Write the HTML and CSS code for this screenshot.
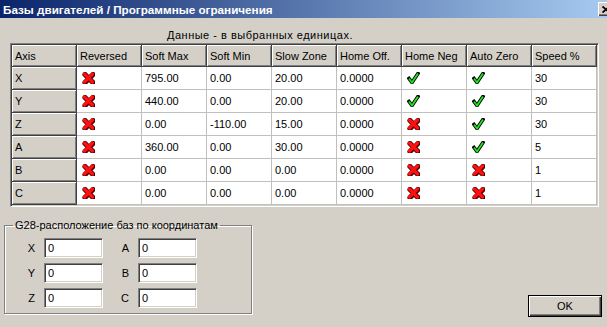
FILE: index.html
```html
<!DOCTYPE html>
<html>
<head>
  <title>Базы двигателей / Программные ограничения</title>
  <meta charset="utf-8">
  <link rel="stylesheet" href="styles.css">
</head>
<body>
  <svg class="defs" width="0" height="0">
    <symbol id="no" viewBox="0 0 13 12">
      <path d="M2.5 2 L10.5 10 M10.5 2 L2.5 10" stroke="#4a0000" stroke-width="5.2" stroke-linecap="round" transform="translate(0.5 0.5)"/>
      <path d="M2.5 2 L10.5 10 M10.5 2 L2.5 10" stroke="#ff1010" stroke-width="3.2" stroke-linecap="round"/>
    </symbol>
    <symbol id="yes" viewBox="0 0 12 12">
      <path d="M1.5 6.5 L4.5 10.5 L10.5 1.5" fill="none" stroke="#000" stroke-width="3.6" stroke-linejoin="miter" stroke-linecap="square"/>
      <path d="M1.5 6.5 L4.5 10.5 L10.5 1.5" fill="none" stroke="#1ee61e" stroke-width="1.8" stroke-linejoin="miter"/>
    </symbol>
  </svg>

  <div class="window">
    <div class="titlebar">
      <span class="title">Базы двигателей / Программные ограничения</span>
      <span class="close">
        <svg width="8" height="7" viewBox="0 0 8 7"><path d="M0.5 0.5 L7.5 6.5 M7.5 0.5 L0.5 6.5" stroke="#000" stroke-width="1.8"/></svg>
      </span>
    </div>

    <div class="caption">Данные - в выбранных единицах.</div>

    <!-- axis limits grid -->
    <div class="grid">
      <table>
        <tr>
          <th>Axis</th><th>Reversed</th><th>Soft Max</th><th>Soft Min</th><th>Slow Zone</th>
          <th>Home Off.</th><th>Home Neg</th><th>Auto Zero</th><th>Speed %</th>
        </tr>
        <tr>
          <th>X</th>
          <td><svg class="ico"><use href="#no"/></svg></td>
          <td>795.00</td><td>0.00</td><td>20.00</td><td>0.0000</td>
          <td><svg class="ico"><use href="#yes"/></svg></td>
          <td><svg class="ico"><use href="#yes"/></svg></td>
          <td>30</td>
        </tr>
        <tr>
          <th>Y</th>
          <td><svg class="ico"><use href="#no"/></svg></td>
          <td>440.00</td><td>0.00</td><td>20.00</td><td>0.0000</td>
          <td><svg class="ico"><use href="#yes"/></svg></td>
          <td><svg class="ico"><use href="#yes"/></svg></td>
          <td>30</td>
        </tr>
        <tr>
          <th>Z</th>
          <td><svg class="ico"><use href="#no"/></svg></td>
          <td>0.00</td><td>-110.00</td><td>15.00</td><td>0.0000</td>
          <td><svg class="ico"><use href="#no"/></svg></td>
          <td><svg class="ico"><use href="#yes"/></svg></td>
          <td>30</td>
        </tr>
        <tr>
          <th>A</th>
          <td><svg class="ico"><use href="#no"/></svg></td>
          <td>360.00</td><td>0.00</td><td>30.00</td><td>0.0000</td>
          <td><svg class="ico"><use href="#no"/></svg></td>
          <td><svg class="ico"><use href="#yes"/></svg></td>
          <td>5</td>
        </tr>
        <tr>
          <th>B</th>
          <td><svg class="ico"><use href="#no"/></svg></td>
          <td>0.00</td><td>0.00</td><td>0.00</td><td>0.0000</td>
          <td><svg class="ico"><use href="#no"/></svg></td>
          <td><svg class="ico"><use href="#no"/></svg></td>
          <td>1</td>
        </tr>
        <tr>
          <th>C</th>
          <td><svg class="ico"><use href="#no"/></svg></td>
          <td>0.00</td><td>0.00</td><td>0.00</td><td>0.0000</td>
          <td><svg class="ico"><use href="#no"/></svg></td>
          <td><svg class="ico"><use href="#no"/></svg></td>
          <td>1</td>
        </tr>
      </table>
    </div>

    <div class="bottom">
      <fieldset class="group">
        <legend>G28-расположение баз по координатам</legend>
        <div class="coords">
          <label>X</label><input class="field" value="0">
          <label>A</label><input class="field" value="0">
          <label>Y</label><input class="field" value="0">
          <label>B</label><input class="field" value="0">
          <label>Z</label><input class="field" value="0">
          <label>C</label><input class="field" value="0">
        </div>
      </fieldset>
      <button class="ok">OK</button>
    </div>
  </div>
</body>
</html>
```

FILE: styles.css
```css
* {
  box-sizing: border-box;
}
body {
  margin: 0;
  padding: 0;
  background: #d4d0c8;
  font-family: "Liberation Sans", Arial, sans-serif;
  font-size: 11px;
  color: #000;
  overflow: hidden;
}
.defs {
  position: absolute;
  width: 0;
  height: 0;
}

.window {
  width: 607px;
  height: 327px;
  overflow: hidden;
}

/* title bar */
.titlebar {
  display: flex;
  align-items: center;
  height: 18px;
  padding-left: 3px;
  background: linear-gradient(to right, #0a246a, #a6caf0);
}
.title {
  color: #fff;
  font-weight: bold;
  font-size: 11.7px;
}
.close {
  display: flex;
  align-items: center;
  justify-content: center;
  margin-left: auto;
  margin-right: -7px;
  width: 16px;
  height: 14px;
  background: #d4d0c8;
  box-shadow: inset 1px 1px 0 #fff, inset -1px -1px 0 #404040, inset -2px -2px 0 #808080;
}

.caption {
  margin: 11px 0 1px 167px;
  line-height: 13px;
  letter-spacing: 0.5px;
}

/* grid */
.grid {
  width: fit-content;
  margin-left: 10px;
  padding: 1px;
  border: 1px solid;
  border-color: #808080 #fff #fff #808080;
  box-shadow: inset 1px 1px 0 #404040, inset -1px -1px 0 #d4d0c8;
}
table {
  border-collapse: separate;
  border-spacing: 0;
  table-layout: fixed;
  width: 584px;
  background: #fff;
}
th, td {
  width: 65px;
  height: 23px;
  padding: 0 3px;
  text-align: left;
  font-weight: normal;
  white-space: nowrap;
}
th {
  background: #d4d0c8;
  border-right: 1px solid #404040;
  border-bottom: 1px solid #404040;
  box-shadow: inset 1px 1px 0 #fff, inset -1px -1px 0 #808080;
}
tr:first-child th {
  height: 22px;
}
td {
  border-right: 1px solid #c0c0c0;
  border-bottom: 1px solid #c0c0c0;
}
.ico {
  display: block;
  width: 13px;
  height: 12px;
  margin-left: 2px;
}

/* bottom part */
.bottom {
  display: flex;
  justify-content: space-between;
  align-items: flex-end;
  height: 112px;
  padding: 0 5px 0 4px;
}
.group {
  width: 248px;
  margin: 0 0 5px 0;
  padding: 6px 8px 5px 8px;
  border: 1px solid #808080;
  box-shadow: inset 1px 1px 0 #fff, 1px 1px 0 #fff;
}
.group legend {
  padding: 0 2px;
  line-height: 13px;
}
.coords {
  display: grid;
  grid-template-columns: 20px 59px 35px 59px;
  row-gap: 5px;
  margin-left: 11px;
}
.coords label {
  text-align: right;
  padding-right: 9px;
  line-height: 20px;
}
.field {
  width: 59px;
  height: 20px;
  margin: 0;
  padding: 0 3px;
  font-family: "Liberation Sans", Arial, sans-serif;
  font-size: 11px;
  background: #fff;
  border: 1px solid;
  border-color: #808080 #fff #fff #808080;
  box-shadow: inset 1px 1px 0 #404040, inset -1px -1px 0 #d4d0c8;
  outline: none;
}

.ok {
  width: 74px;
  height: 22px;
  margin: 0 0 2px 0;
  padding: 0;
  font-family: "Liberation Sans", Arial, sans-serif;
  font-size: 11px;
  color: #000;
  background: #d4d0c8;
  border: 1px solid #000;
  box-shadow: inset 1px 1px 0 #fff, inset -1px -1px 0 #404040, inset -2px -2px 0 #808080;
}
```
